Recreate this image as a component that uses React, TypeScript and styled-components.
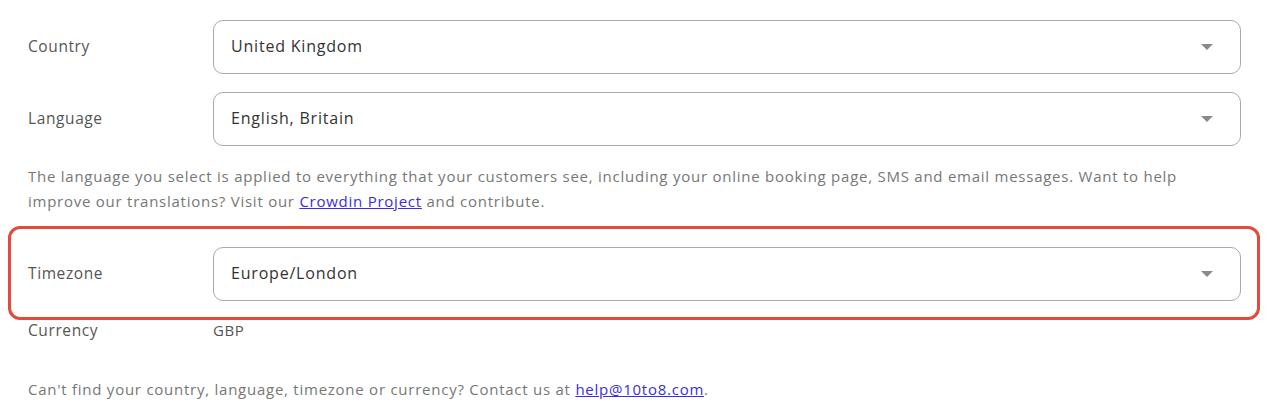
import React from "react";
import styled, { createGlobalStyle } from "styled-components";

const Global = createGlobalStyle`
  html, body { margin: 0; padding: 0; background: #fff; }
  body { font-family: "Open Sans", "Liberation Sans", sans-serif; -webkit-font-smoothing: antialiased; }
`;

const Page = styled.div`
  width: 1273px;
  height: 413px;
  box-sizing: border-box;
  padding: 20px 32px 0 28px;
  display: flex;
  flex-direction: column;
`;

const Row = styled.div<{ $mt?: number }>`
  display: grid;
  grid-template-columns: 185px 1fr;
  align-items: center;
  margin-top: ${(p) => p.$mt ?? 0}px;
`;

const Label = styled.div`
  font-size: 15.5px;
  letter-spacing: 0.6px;
  color: #555;
  padding-bottom: 3px;
`;

const Select = styled.div`
  height: 54px;
  box-sizing: border-box;
  border: 1px solid #aaa;
  border-radius: 10px;
  display: flex;
  align-items: center;
  justify-content: space-between;
  padding: 0 27px 3px 17px;
  font-size: 16px;
  letter-spacing: 0.8px;
  font-weight: 500;
  color: #333;
`;

const Caret = styled.span`
  width: 0;
  height: 0;
  margin-top: 3px;
  border-left: 6px solid transparent;
  border-right: 6px solid transparent;
  border-top: 6px solid #8a8a8a;
`;

const Help = styled.p`
  margin: 18px 0 0;
  font-size: 15px;
  letter-spacing: 0.75px;
  line-height: 25px;
  color: #777;
  max-width: 1190px;
`;

const Link = styled.a`
  color: #3b2de0;
  text-decoration: underline;
`;

const Highlight = styled.div`
  margin: 12px -19px 0 -20px;
  border: 3px solid #e04b3b;
  border-radius: 12px;
  padding: 18px 16px 16px 17px;
`;

const Plain = styled.div`
  display: grid;
  grid-template-columns: 185px 1fr;
  margin-top: 0;
  font-size: 15.5px;
  letter-spacing: 0.6px;
  color: #555;
  line-height: 20px;
`;

const Value = styled.div`
  font-size: 15px;
  letter-spacing: 0.6px;
  color: #555;
`;

const Footer = styled.p`
  margin: 39px 0 0;
  font-size: 15px;
  letter-spacing: 0.75px;
  color: #777;
  line-height: 20px;
`;

const Dropdown = ({ value }: { value: string }) => (
  <Select>
    <span>{value}</span>
    <Caret />
  </Select>
);

export default function App() {
  return (
    <>
      <Global />
      <Page>
        <Row>
          <Label>Country</Label>
          <Dropdown value="United Kingdom" />
        </Row>
        <Row $mt={18}>
          <Label>Language</Label>
          <Dropdown value="English, Britain" />
        </Row>
        <Help>
          The language you select is applied to everything that your customers see, including your online
          booking page, SMS and email messages. Want to help improve our translations? Visit our{" "}
          <Link href="#">Crowdin Project</Link> and contribute.
        </Help>
        <Highlight>
          <Row>
            <Label>Timezone</Label>
            <Dropdown value="Europe/London" />
          </Row>
        </Highlight>
        <Plain>
          <span>Currency</span>
          <Value>GBP</Value>
        </Plain>
        <Footer>
          Can't find your country, language, timezone or currency? Contact us at{" "}
          <Link href="#">help@10to8.com</Link>.
        </Footer>
      </Page>
    </>
  );
}
